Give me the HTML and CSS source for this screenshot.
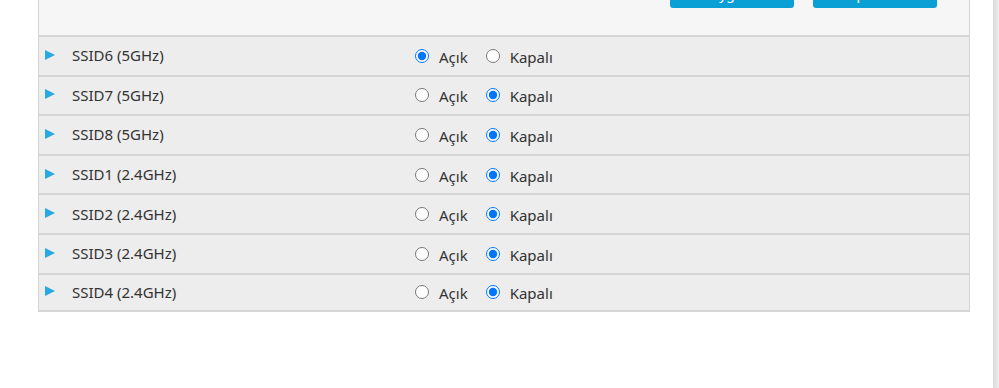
FILE: index.html
```html
<!DOCTYPE html>
<html lang="tr">
<head>
  <meta charset="UTF-8">
  <title>SSID Ayarları</title>
  <link rel="stylesheet" href="styles.css">
</head>
<body>
  <div class="page">
    <div class="panel">
      <div class="panel-head">
        <button class="btn">Uygula</button>
        <button class="btn">İptal Et</button>
      </div>
      <div id="ssidList"></div>
    </div>
  </div>
  <div class="edge"></div>

  <script>
    const ssids = [
      { name: 'SSID6 (5GHz)', on: true },
      { name: 'SSID7 (5GHz)', on: false },
      { name: 'SSID8 (5GHz)', on: false },
      { name: 'SSID1 (2.4GHz)', on: false },
      { name: 'SSID2 (2.4GHz)', on: false },
      { name: 'SSID3 (2.4GHz)', on: false },
      { name: 'SSID4 (2.4GHz)', on: false }
    ];

    function renderList() {
      const list = document.getElementById('ssidList');
      ssids.forEach((ssid, i) => {
        const row = document.createElement('div');
        row.classList.add('ssid-row');
        row.innerHTML = `
          <span class="arrow"></span>
          <span class="ssid-name">${ssid.name}</span>
          <label class="opt"><input type="radio" name="ssid${i}" ${ssid.on ? 'checked' : ''}> Açık</label>
          <label class="opt"><input type="radio" name="ssid${i}" ${ssid.on ? '' : 'checked'}> Kapalı</label>
        `;
        list.appendChild(row);
      });
    }

    renderList();
  </script>
</body>
</html>
```

FILE: styles.css
```css
* {
  margin: 0;
  padding: 0;
  box-sizing: border-box;
}

body {
  font-family: 'Noto Sans', 'Open Sans', sans-serif;
  font-size: 15px;
  color: #333;
  background-color: #fff;
  height: 388px;
  overflow: hidden;
}

.page {
  padding-left: 38px;
}

.panel {
  width: 932px;
  border-left: 1px solid #d3d3d3;
  border-right: 1px solid #d3d3d3;
}

.panel-head {
  height: 35px;
  background-color: #f6f6f6;
  display: flex;
  justify-content: flex-end;
  gap: 19px;
  padding-right: 32px;
}

.btn {
  width: 124px;
  height: 30px;
  margin-top: -22px;
  border: none;
  border-radius: 3px;
  background-color: #0aa0d6;
  color: #fff;
  font-family: inherit;
  font-size: 14px;
}

.ssid-row {
  display: flex;
  align-items: center;
  height: 39.6px;
  background-color: #ededed;
  border-top: 2px solid #d6d6d6;
  padding-left: 6px;
}

.ssid-row:last-child {
  border-bottom: 2px solid #d6d6d6;
}

.arrow {
  width: 0;
  height: 0;
  border-top: 5.5px solid transparent;
  border-bottom: 5.5px solid transparent;
  border-left: 10px solid #27a9e1;
  margin-top: -2px;
}

.ssid-name {
  width: 343px;
  margin-left: 17px;
  margin-top: -1px;
}

.opt {
  display: flex;
  align-items: center;
  margin-right: 18px;
  margin-top: 2px;
}

.opt input {
  width: 14px;
  height: 14px;
  margin: 0 10px 2px 0;
}

.edge {
  position: fixed;
  top: 0;
  right: 0;
  width: 6px;
  height: 100%;
  background: linear-gradient(to right, #d9d9d9, #eeeeee);
}
```
